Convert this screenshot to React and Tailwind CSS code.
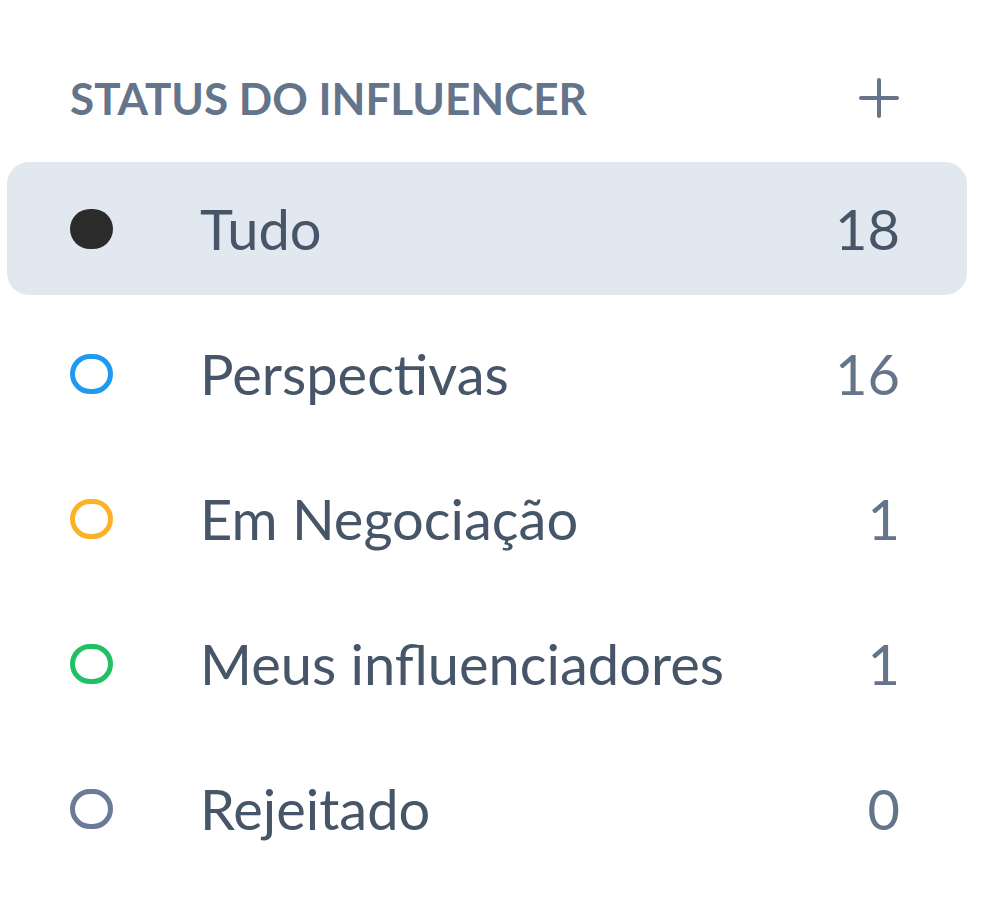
export default function App() {
  const rows = [
    { label: "Tudo", count: 18, kind: "filled", color: "#2b2b2b", selected: true },
    { label: "Perspectivas", count: 16, color: "#1e9bf0" },
    { label: "Em Negociação", count: 1, color: "#fbb227" },
    { label: "Meus influenciadores", count: 1, color: "#22c064" },
    { label: "Rejeitado", count: 0, color: "#6b7a96" },
  ];
  return (
    <div className="w-[1000px] h-[909px] bg-white pt-[68px] px-[7px]" style={{ fontFamily: "Lato, 'Open Sans', sans-serif" }}>
      <div className="w-[960px]">
        <div className="h-[60px] pl-[63px] pr-[67px] flex items-center justify-between mb-[34px]">
          <span className="text-[44px] font-bold text-[#64748b]">STATUS DO INFLUENCER</span>
          <svg width="42" height="42" viewBox="0 0 42 42">
            <line x1="21" y1="3" x2="21" y2="39" stroke="#64748b" strokeWidth="4" strokeLinecap="round" />
            <line x1="3" y1="21" x2="39" y2="21" stroke="#64748b" strokeWidth="4" strokeLinecap="round" />
          </svg>
        </div>
        <div className="flex flex-col gap-[12px]">
          {rows.map((r) => (
            <div
              key={r.label}
              className={
                "h-[133px] rounded-[22px] pl-[63px] pr-[67px] flex items-center " +
                (r.selected ? "bg-[#e2e8f0]" : "")
              }
            >
              {r.kind === "filled" ? (
                <span className="w-[43px] h-[40px] rounded-full shrink-0" style={{ background: r.color }} />
              ) : (
                <span className="w-[43px] h-[40px] rounded-full shrink-0 border-[5px]" style={{ borderColor: r.color }} />
              )}
              <span className="ml-[87px] text-[56px] text-[#475569] flex-1">{r.label}</span>
              <span className={"text-[56px] " + (r.selected ? "text-[#475569]" : "text-[#64748b]")}>{r.count}</span>
            </div>
          ))}
        </div>
      </div>
    </div>
  );
}
